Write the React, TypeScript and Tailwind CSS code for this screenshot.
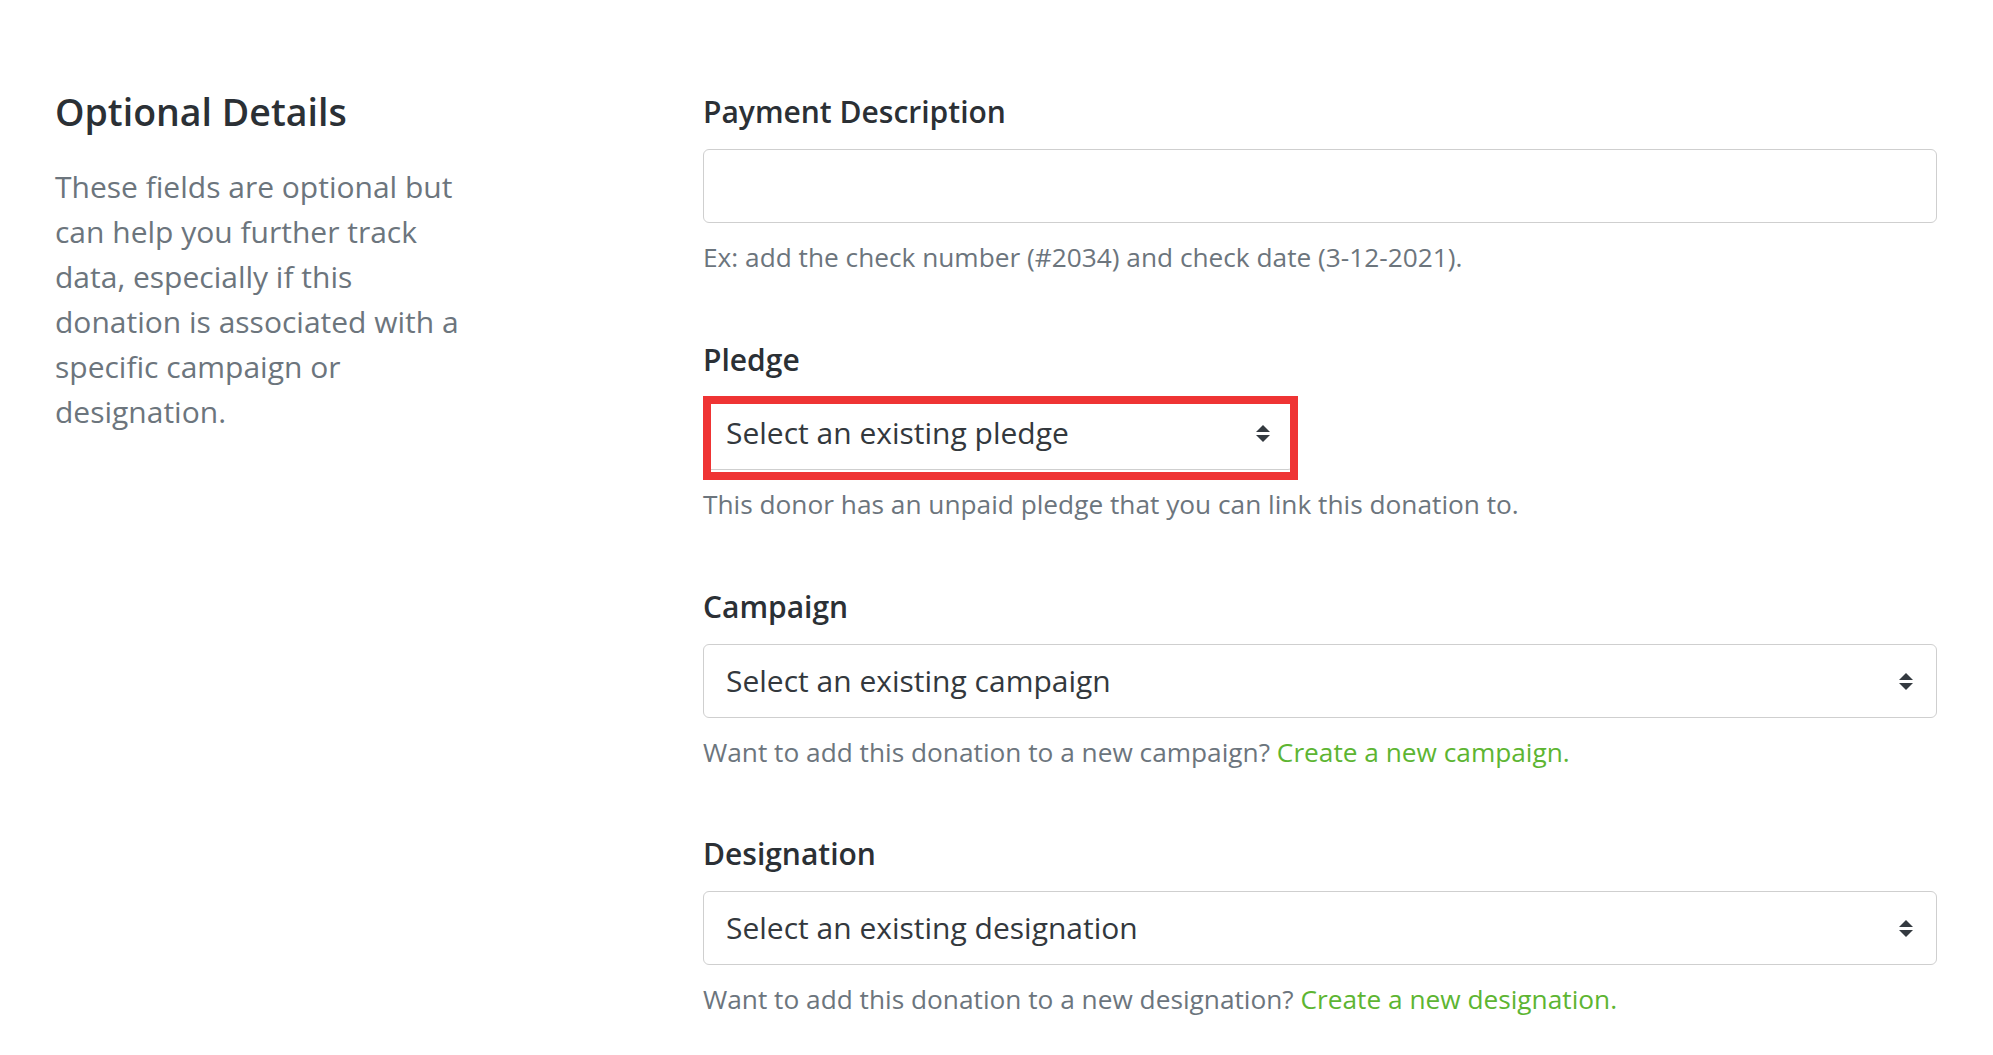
import React from 'react';

const SelectArrows: React.FC = () => (
  <svg width="14" height="17" viewBox="0 0 14 17" className="shrink-0">
    <polygon points="7,0 14,7 0,7" fill="#343a40" />
    <polygon points="0,10 14,10 7,17" fill="#343a40" />
  </svg>
);

interface SelectBoxProps {
  placeholder: string;
  className?: string;
}

const SelectBox: React.FC<SelectBoxProps> = ({ placeholder, className = '' }) => (
  <div
    className={`flex h-[74px] items-center justify-between rounded-md border border-[#cfcfcf] bg-white pl-[22px] pr-[23px] ${className}`}
  >
    <span className="text-[30px] leading-[40px] text-[#33383d]">{placeholder}</span>
    <SelectArrows />
  </div>
);

const Label: React.FC<{ children: React.ReactNode }> = ({ children }) => (
  <div className="text-[30px] font-semibold leading-[40px] text-[#2b3035]">{children}</div>
);

const Help: React.FC<{ children: React.ReactNode }> = ({ children }) => (
  <p className="mt-[16px] text-[26.25px] leading-[36px] text-[#6c757d]">{children}</p>
);

export default function App() {
  return (
    <div className="min-h-screen bg-white font-['Open_Sans',sans-serif]">
      <div className="flex pl-[55px] pr-[56px] pt-[89px]">
        {/* left intro column */}
        <div className="w-[430px] shrink-0">
          <h2 className="mt-[1px] text-[37.5px] font-semibold leading-[44px] text-[#2b3035]">Optional Details</h2>
          <p className="mt-[30px] text-[30px] leading-[45px] text-[#6c757d]">
            These fields are optional but can help you further track data, especially if this
            donation is associated with a specific campaign or designation.
          </p>
        </div>

        {/* form fields */}
        <div className="ml-[218px] flex-1 pt-[3px]">
          <div>
            <Label>Payment Description</Label>
            <div className="mt-[17px] h-[74px] rounded-md border border-[#cfcfcf] bg-white" />
            <Help>Ex: add the check number (#2034) and check date (3-12-2021).</Help>
          </div>

          <div className="mt-[65px]">
            <Label>Pledge</Label>
            <div className="relative mt-[16px] w-[595px]">
              <SelectBox placeholder="Select an existing pledge" className="w-[591px]" />
              <div className="pointer-events-none absolute left-0 top-0 h-[84px] w-[595px] border-8 border-[#ef3434]" />
            </div>
            <Help>This donor has an unpaid pledge that you can link this donation to.</Help>
          </div>

          <div className="mt-[65px]">
            <Label>Campaign</Label>
            <SelectBox placeholder="Select an existing campaign" className="mt-[17px]" />
            <Help>
              Want to add this donation to a new campaign?{' '}
              <a href="#" className="text-[#5db532]">Create a new campaign.</a>
            </Help>
          </div>

          <div className="mt-[64px]">
            <Label>Designation</Label>
            <SelectBox placeholder="Select an existing designation" className="mt-[17px]" />
            <Help>
              Want to add this donation to a new designation?{' '}
              <a href="#" className="text-[#5db532]">Create a new designation.</a>
            </Help>
          </div>
        </div>
      </div>
    </div>
  );
}
